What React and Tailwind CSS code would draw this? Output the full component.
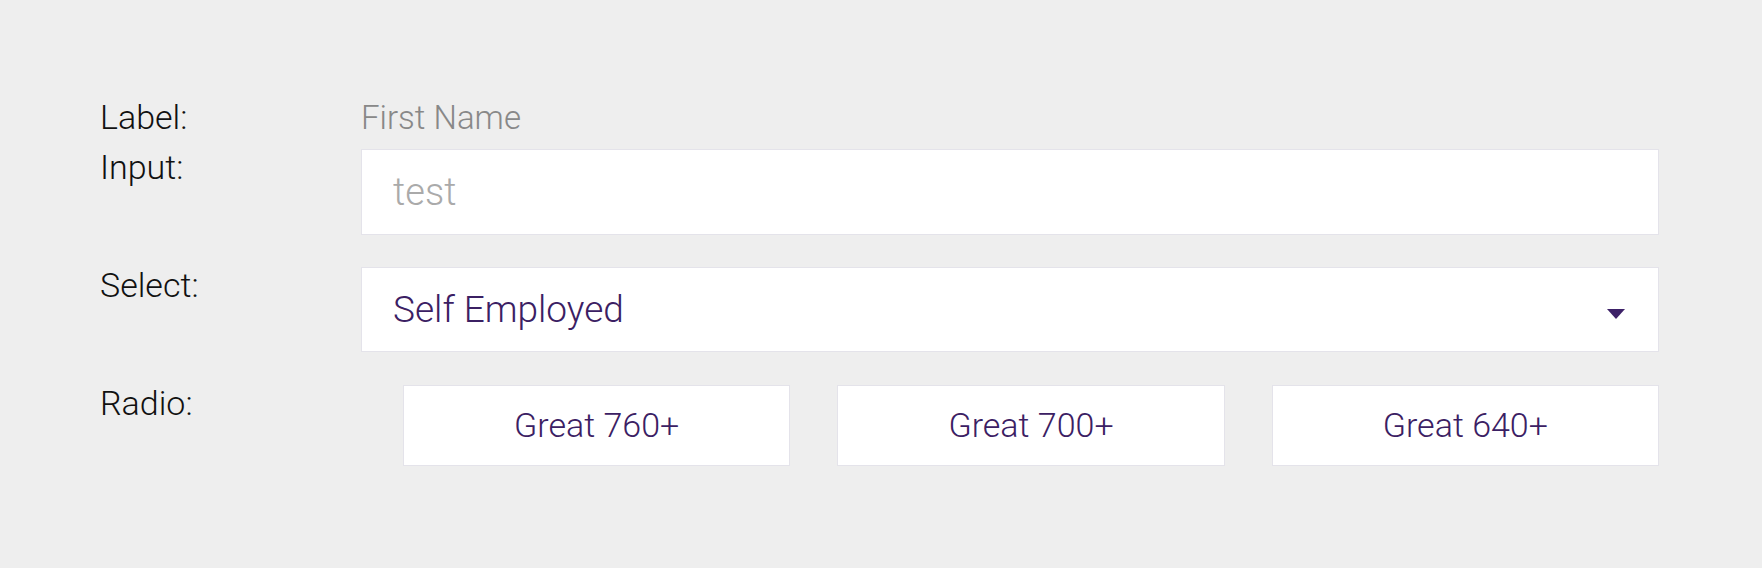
import { useState } from "react";

const options = ["Great 760+", "Great 700+", "Great 640+"];

const App = () => {
  const [value, setValue] = useState("");
  const [picked, setPicked] = useState(null);

  return (
    <div className="min-h-screen bg-[#eeeeee] pl-[100px] pr-[103px] pt-[99px] font-['Roboto',sans-serif] font-light">
      <div className="grid grid-cols-[261px_1fr]">
        {/* label row */}
        <div className="text-[34px] leading-[37px] text-[#111111]">Label:</div>
        <div className="text-[33px] leading-[37px] text-[#888888]">First Name</div>

        {/* input row */}
        <div className="mt-[13px] text-[34px] leading-[37px] text-[#111111]">Input:</div>
        <div className="mt-[13px]">
          <input
            value={value}
            onChange={(e) => setValue(e.target.value)}
            placeholder="test"
            className="h-[86px] w-full border border-[#e4e3ea] bg-white pl-[31px] text-[38px] text-[#3b2063] outline-none placeholder:text-[#aaaaaa]"
          />
        </div>

        {/* select row */}
        <div className="mt-[32px] text-[34px] leading-[37px] text-[#111111]">Select:</div>
        <div className="mt-[32px]">
          <div className="flex h-[85px] w-full items-center justify-between border border-[#e4e3ea] bg-white pl-[31px] pr-[33px]">
            <span className="text-[37px] text-[#3b2063]">Self Employed</span>
            <svg width="18" height="10" viewBox="0 0 18 10" className="mt-[8px]">
              <path d="M0 0 H18 L9 10 Z" fill="#3d2168" />
            </svg>
          </div>
        </div>

        {/* radio row */}
        <div className="mt-[33px] text-[34px] leading-[37px] text-[#111111]">Radio:</div>
        <div className="mt-[33px] flex gap-[47px] pl-[42px]">
          {options.map((opt, i) => (
            <button
              key={opt}
              onClick={() => setPicked(i)}
              className={`flex h-[81px] flex-1 items-center justify-center border bg-white text-[34px] text-[#3b2063] ${
                picked === i ? "border-[#3d2168]" : "border-[#e4e3ea]"
              }`}
            >
              {opt}
            </button>
          ))}
        </div>
      </div>
    </div>
  );
};

export default App;
